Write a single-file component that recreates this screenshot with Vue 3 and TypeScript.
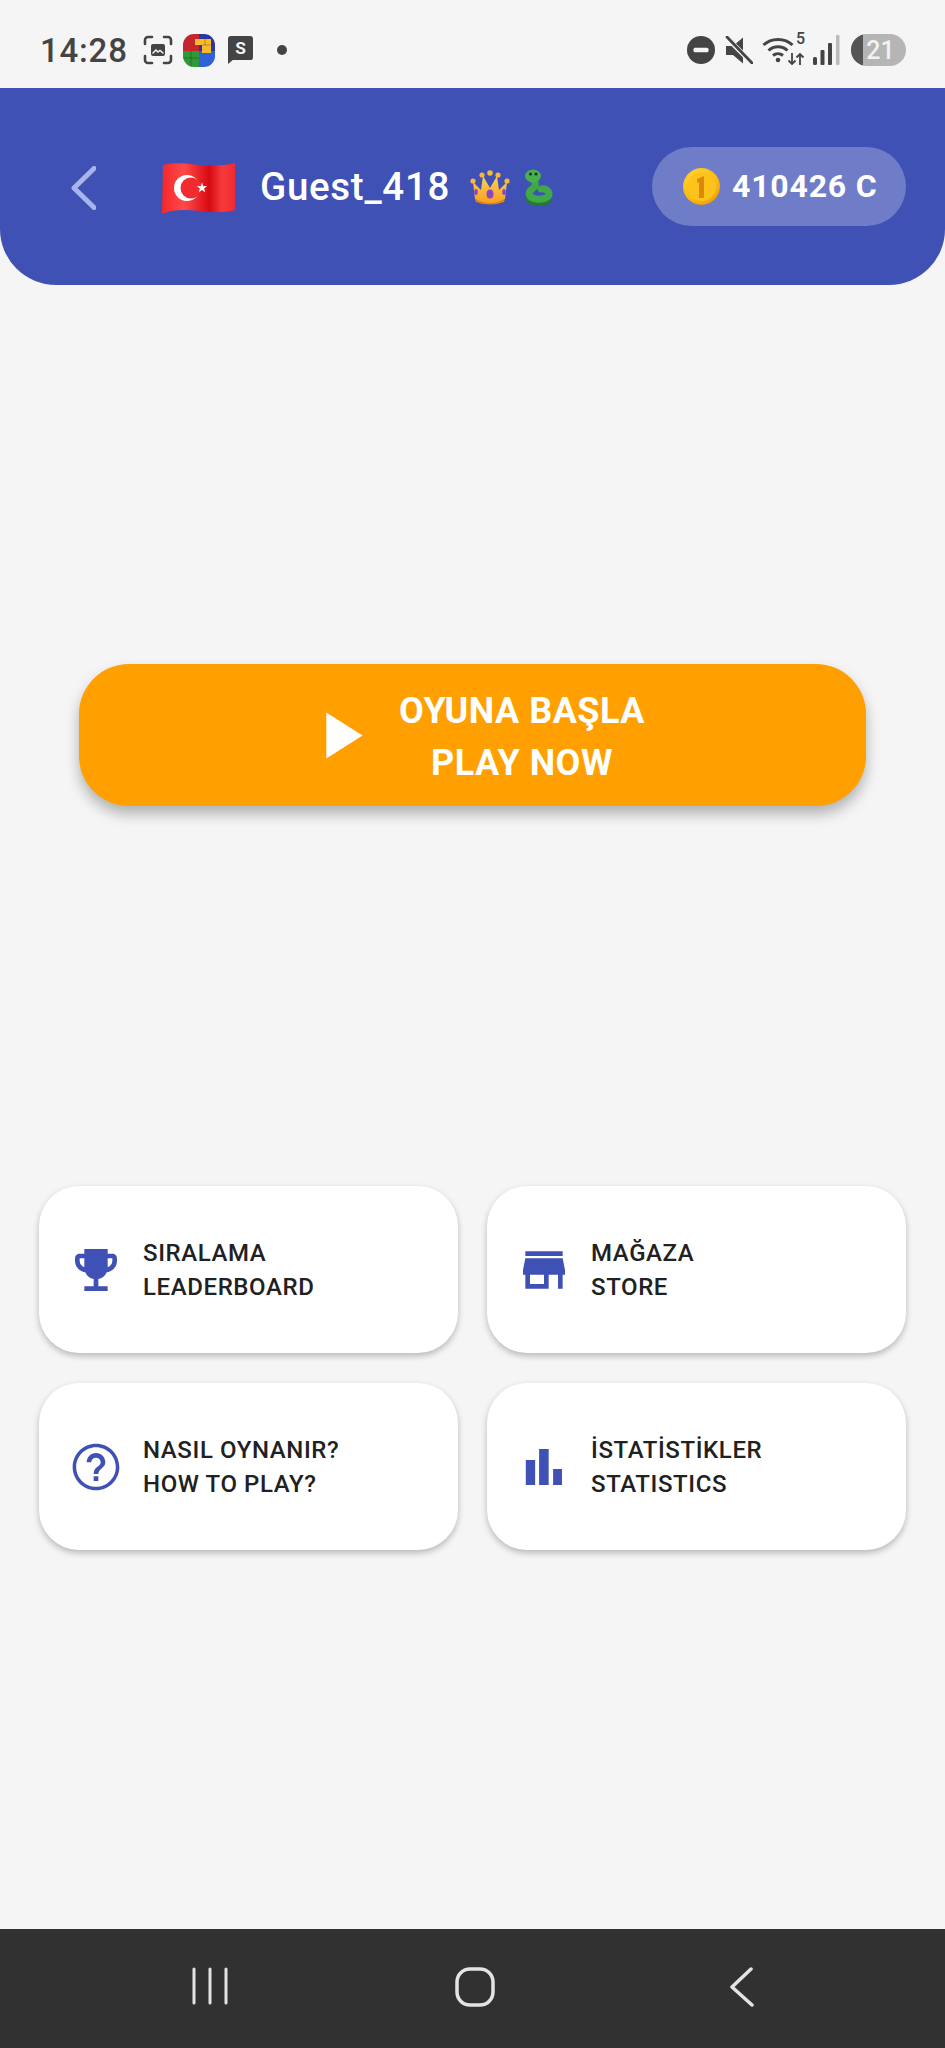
<template>
  <div class="screen">
    <div class="status-bar">
      <span class="clock">14:28</span>
      <svg class="capture" viewBox="0 0 30 30" fill="none" stroke="#444" stroke-width="2.6" stroke-linecap="round">
        <path d="M2 9V5a3 3 0 0 1 3-3h4M21 2h4a3 3 0 0 1 3 3v4M28 21v4a3 3 0 0 1-3 3h-4M9 28H5a3 3 0 0 1-3-3v-4" />
        <rect x="8" y="9" width="14" height="12" rx="2" fill="#444" stroke="none" />
        <path d="M10 18l3-3 2 2 2-1.500 3 2.500" stroke="#f5f5f5" stroke-width="1.500" />
      </svg>
      <svg class="blocks" viewBox="0 0 32 33">
        <defs>
          <clipPath id="blocksClip"><rect width="32" height="33" rx="11" /></clipPath>
        </defs>
        <g clip-path="url(#blocksClip)">
          <rect width="16" height="17" fill="#c4262c" />
          <rect x="16" width="16" height="17" fill="#2a3a9c" />
          <rect y="17" width="16" height="16" fill="#2f9a35" />
          <rect x="16" y="17" width="16" height="16" fill="#2f62d8" />
          <path d="M12 5h16v14h-9v-8h-7z" fill="#f9b92b" />
          <path d="M0 24h16M8 17v16M19 11h9M22 5v6" stroke="#000" stroke-opacity=".25" stroke-width="1" />
        </g>
      </svg>
      <svg class="note" viewBox="0 0 26 29">
        <path d="M3 0h20a3 3 0 0 1 3 3v19a3 3 0 0 1-3 3H5l-5 4V3a3 3 0 0 1 3-3z" fill="#444" />
        <text x="13" y="19" text-anchor="middle" class="note-letter">S</text>
      </svg>
      <span class="dot"></span>

      <span class="status-spacer"></span>

      <svg class="dnd" viewBox="0 0 28 28">
        <circle cx="14" cy="14" r="14" fill="#444" />
        <rect x="6.500" y="11.800" width="15" height="4.400" rx="1.500" fill="#f5f5f5" />
      </svg>
      <svg class="mute" viewBox="0 0 28 28">
        <path d="M0 9h7l10-8.500v26L7 18H0z" fill="#444" transform="translate(1 1)" />
        <path d="M2 2l24 24" stroke="#f5f5f5" stroke-width="5" />
        <path d="M2 1l25 26" stroke="#444" stroke-width="2.800" stroke-linecap="round" />
      </svg>
      <div class="wifi">
        <svg viewBox="0 0 32 30" fill="none" stroke="#444" stroke-width="3" class="wifi-arcs">
          <path d="M1.500 11C9 3.500 23 3.500 30.500 11" />
          <path d="M6.500 16.500C12 11.500 20 11.500 25.500 16.500" />
          <path d="M11 21.500c3-2.500 7-2.500 10 0" />
          <circle cx="16" cy="26" r="2.300" fill="#444" stroke="none" />
        </svg>
        <span class="wifi-five">5</span>
        <svg viewBox="0 0 18 12" class="wifi-arrows" fill="none" stroke="#444" stroke-width="1.800">
          <path d="M5 0v11M1.500 7.500L5 11l3.500-3.500M13 12V1M9.500 4.500L13 1l3.500 3.500" />
        </svg>
      </div>
      <svg class="signal" viewBox="0 0 27 30">
        <rect x="0" y="22" width="4" height="8" rx="1.500" fill="#444" />
        <rect x="7.500" y="15" width="4" height="15" rx="1" fill="#444" />
        <rect x="15" y="8" width="4" height="22" rx="1" fill="#444" />
        <rect x="23" y="0" width="3.500" height="30" rx="1" fill="#bbb" />
      </svg>
      <div class="battery">
        <span class="battery-fill"></span>
        <span class="battery-text">21</span>
      </div>
    </div>

    <header class="top-bar">
      <svg class="back" viewBox="0 0 25 44" fill="none" stroke="#a9b5ea" stroke-width="5" stroke-linecap="round" stroke-linejoin="round">
        <path d="M23 2.500L3 22l20 19.500" />
      </svg>
      <svg class="flag" viewBox="0 0 73 53">
        <defs>
          <linearGradient id="flagShade" x1="0" x2="1" y1="0" y2="0">
            <stop offset="0" stop-color="#f4272b" />
            <stop offset=".3" stop-color="#ff4a4a" />
            <stop offset=".65" stop-color="#d80a12" />
            <stop offset=".82" stop-color="#f53a3c" />
            <stop offset="1" stop-color="#f02a30" />
          </linearGradient>
        </defs>
        <path d="M1 4C20-2 44 9 73 2v47C48 56 24 43 0 53z" fill="url(#flagShade)" />
        <circle cx="25" cy="27" r="13" fill="#fff" />
        <circle cx="29" cy="27" r="10.500" fill="#f02c30" />
        <path d="M40 21.500l1.300 3.700 3.900-.1-3.100 2.400 1.100 3.700-3.200-2.200-3.200 2.200 1.100-3.700-3.100-2.400 3.900.1z" fill="#fff" />
      </svg>
      <span class="player">Guest_418</span>
      <svg class="crown" viewBox="0 0 40 35">
        <defs>
          <linearGradient id="crownGold" x1="0" x2="0" y1="0" y2="1">
            <stop offset="0" stop-color="#fdd05a" />
            <stop offset="1" stop-color="#f7a01e" />
          </linearGradient>
        </defs>
        <path d="M3 12l8 8 2-14 7 12 7-12 2 14 8-8-2 17q-15 9-30 0z" fill="url(#crownGold)" />
        <path d="M5 29q15 8 30 0l-1 3q-14 5-28 0z" fill="#e0841c" />
        <circle cx="3" cy="11" r="2.600" fill="#f6b73c" />
        <circle cx="12" cy="5" r="2.600" fill="#f6b73c" />
        <circle cx="20" cy="3" r="2.800" fill="#f6b73c" />
        <circle cx="28" cy="5" r="2.600" fill="#f6b73c" />
        <circle cx="37" cy="11" r="2.600" fill="#f6b73c" />
        <ellipse cx="20" cy="24" rx="3.500" ry="4.500" fill="#8e44c9" />
        <ellipse cx="6" cy="22" rx="1.800" ry="3" fill="#8e44c9" />
        <ellipse cx="34" cy="22" rx="1.800" ry="3" fill="#8e44c9" />
      </svg>
      <svg class="snake" viewBox="0 0 30 37" fill="none">
        <path d="M4 31c6 5 18 5 22 1" stroke="#237a30" stroke-width="4" stroke-linecap="round" />
        <path d="M9 9c5 5 4 8 0 11-5 4-3 9 4 10 6 1 13-1 13-5 0-4-5-6-8-5" stroke="#3fa94a" stroke-width="7" stroke-linecap="round" />
        <ellipse cx="10" cy="7" rx="8" ry="6.500" fill="#46b04f" />
        <circle cx="7.500" cy="5" r="1.500" fill="#16301a" />
        <circle cx="13" cy="5" r="1.500" fill="#16301a" />
      </svg>
      <span class="header-spacer"></span>
      <div class="coins">
        <svg class="coin" viewBox="0 0 37 37">
          <defs>
            <radialGradient id="coinGold" cx=".4" cy=".35" r=".75">
              <stop offset="0" stop-color="#ffe04d" />
              <stop offset=".7" stop-color="#fbb80f" />
              <stop offset="1" stop-color="#e48f0a" />
            </radialGradient>
          </defs>
          <circle cx="18.500" cy="18.500" r="18.500" fill="url(#coinGold)" />
          <circle cx="18.500" cy="18.500" r="14.500" fill="#fdc31c" />
          <path d="M14 11l7-3v22h-5V14l-2 1z" fill="#d98a0a" />
        </svg>
        <span>410426 C</span>
      </div>
    </header>

    <main class="content">
      <button class="play-btn" type="button">
        <svg class="play-icon" viewBox="0 0 24 24"><path d="M8 5v14l11-7z" fill="#fff" /></svg>
        <span class="play-label">OYUNA BAŞLA<br />PLAY NOW</span>
      </button>

      <div class="menu-grid">
        <div v-for="item in menuItems" :key="item.top" class="menu-card">
          <svg class="menu-icon" viewBox="0 0 24 24"><path :d="item.icon" fill="#3f51b5" /></svg>
          <span class="menu-label">{{ item.top }}<br />{{ item.bottom }}</span>
        </div>
      </div>
    </main>

    <nav class="nav-bar">
      <svg class="nav-recents" viewBox="0 0 36 38" stroke="#e4e4e4" stroke-width="3" stroke-linecap="round">
        <path d="M2 2v34M18 2v34M34 2v34" />
      </svg>
      <svg class="nav-home" viewBox="0 0 40 40" fill="none" stroke="#e4e4e4" stroke-width="3.500">
        <rect x="2" y="2" width="36" height="36" rx="13" />
      </svg>
      <svg class="nav-back" viewBox="0 0 25 40" fill="none" stroke="#e4e4e4" stroke-width="3.500" stroke-linecap="round" stroke-linejoin="round">
        <path d="M22 2L3 20l20 18" />
      </svg>
    </nav>
  </div>
</template>

<script setup lang="ts">
interface MenuItem {
  top: string
  bottom: string
  icon: string
}

const menuItems: MenuItem[] = [
  {
    top: 'SIRALAMA',
    bottom: 'LEADERBOARD',
    icon: 'M19 5h-2V3H7v2H5c-1.100 0-2 .9-2 2v1c0 2.550 1.920 4.630 4.390 4.940.63 1.500 1.980 2.630 3.610 2.960V19H7v2h10v-2h-4v-3.100c1.630-.33 2.980-1.460 3.610-2.960C19.080 12.630 21 10.550 21 8V7c0-1.100-.9-2-2-2zM5 8V7h2v3.820C5.840 10.400 5 9.300 5 8zm14 0c0 1.300-.84 2.400-2 2.820V7h2v1z'
  },
  {
    top: 'MAĞAZA',
    bottom: 'STORE',
    icon: 'M20 4H4v2h16V4zm1 10v-2l-1-5H4l-1 5v2h1v6h10v-6h4v6h2v-6h1zm-9 4H6v-4h6v4z'
  },
  {
    top: 'NASIL OYNANIR?',
    bottom: 'HOW TO PLAY?',
    icon: 'M11 18h2v-2h-2v2zm1-16C6.480 2 2 6.480 2 12s4.480 10 10 10 10-4.480 10-10S17.520 2 12 2zm0 18.500c-4.690 0-8.500-3.810-8.500-8.500s3.810-8.500 8.500-8.500 8.500 3.810 8.500 8.500-3.810 8.500-8.500 8.500zM12 6c-2.210 0-4 1.790-4 4h2c0-1.100.9-2 2-2s2 .9 2 2c0 2-3 1.750-3 5h2c0-2.250 3-2.500 3-5 0-2.210-1.790-4-4-4z'
  },
  {
    top: 'İSTATİSTİKLER',
    bottom: 'STATISTICS',
    icon: 'M4.200 9h4v10.700h-4zM9.900 4.300h4.100v15.400H9.900zM15.900 12.900h3.800v6.800h-3.800z'
  }
]
</script>

<style>
html,
body {
  margin: 0;
  background: #f5f5f5;
}
</style>

<style scoped>
.screen {
  width: 945px;
  height: 2048px;
  display: flex;
  flex-direction: column;
  background: #f5f5f5;
  font-family: Roboto, "Liberation Sans", sans-serif;
  overflow: hidden;
}

.status-bar {
  height: 88px;
  flex-shrink: 0;
  display: flex;
  align-items: center;
  padding: 12px 39px 0 40px;
  box-sizing: border-box;
}

.clock {
  font-size: 33px;
  font-weight: 500;
  color: #444;
  letter-spacing: 0.8px;
  width: 103px;
}

.capture {
  width: 30px;
  height: 30px;
  margin-right: 10px;
}

.blocks {
  width: 32px;
  height: 33px;
  margin-right: 13px;
}

.note {
  width: 25px;
  height: 28px;
}

.note-letter {
  fill: #f5f5f5;
  font-size: 18px;
  font-weight: 700;
  font-family: Roboto, sans-serif;
}

.dot {
  width: 10px;
  height: 10px;
  border-radius: 50%;
  background: #444;
  margin-left: 24px;
}

.status-spacer {
  flex: 1;
}

.dnd {
  width: 28px;
  height: 28px;
  margin-right: 10px;
}

.mute {
  width: 28px;
  height: 28px;
  margin-right: 9px;
}

.wifi {
  position: relative;
  width: 43px;
  height: 32px;
  margin-right: 8px;
}

.wifi-arcs {
  width: 32px;
  height: 30px;
  display: block;
}

.wifi-five {
  position: absolute;
  top: -3px;
  right: 0;
  font-size: 16px;
  line-height: 16px;
  font-weight: 500;
  color: #444;
}

.wifi-arrows {
  position: absolute;
  right: 0;
  bottom: 0;
  width: 18px;
  height: 14px;
}

.signal {
  width: 27px;
  height: 30px;
  margin-right: 11px;
}

.battery {
  position: relative;
  width: 55px;
  height: 32px;
  border-radius: 16px;
  background: #b5b5b5;
  overflow: hidden;
  display: flex;
  align-items: center;
  justify-content: center;
}

.battery-fill {
  position: absolute;
  left: 0;
  top: 0;
  bottom: 0;
  width: 12px;
  background: #555;
}

.battery-text {
  position: relative;
  color: #f2f2f2;
  font-size: 25px;
  font-weight: 500;
  margin-left: 4px;
}

.top-bar {
  height: 197px;
  flex-shrink: 0;
  display: flex;
  align-items: center;
  padding: 0 39px 0 71px;
  box-sizing: border-box;
  background: #3f51b5;
  border-radius: 0 0 56px 56px;
}

.back {
  width: 25px;
  height: 44px;
  margin-right: 66px;
  margin-top: 2px;
}

.flag {
  width: 73px;
  height: 53px;
  margin-right: 25px;
  margin-top: 1px;
}

.player {
  font-size: 38.5px;
  font-weight: 500;
  color: #fff;
  margin-right: 20px;
  letter-spacing: 0.7px;
}

.crown {
  width: 40px;
  height: 35px;
  margin-right: 13px;
  margin-top: 2px;
}

.snake {
  width: 30px;
  height: 37px;
  margin-top: 2px;
}

.header-spacer {
  flex: 1;
}

.coins {
  width: 254px;
  height: 79px;
  border-radius: 40px;
  margin-top: -1px;
  background: rgba(255, 255, 255, 0.25);
  display: flex;
  align-items: center;
  gap: 12px;
  padding-left: 31px;
  box-sizing: border-box;
  color: #fff;
  font-size: 32px;
  font-weight: 700;
  letter-spacing: 0.8px;
}

.coin {
  width: 37px;
  height: 37px;
  flex-shrink: 0;
}

.content {
  flex: 1;
  display: flex;
  flex-direction: column;
  padding: 379px 39px 0;
}

.play-btn {
  width: 787px;
  height: 142px;
  margin: 0 0 380px 40px;
  align-self: flex-start;
  border: none;
  border-radius: 50px;
  background: #ff9f00;
  box-shadow: 0 8px 14px rgba(0, 0, 0, 0.28);
  display: flex;
  align-items: center;
  justify-content: center;
  gap: 20px;
  padding: 0;
  color: #fff;
  font-family: inherit;
}

.play-icon {
  width: 79px;
  height: 79px;
  flex-shrink: 0;
}

.play-label {
  font-size: 36px;
  font-weight: 700;
  letter-spacing: 0.5px;
  line-height: 52px;
  text-align: center;
  padding-top: 3px;
}

.menu-grid {
  display: grid;
  grid-template-columns: 419px 419px;
  grid-auto-rows: 167px;
  column-gap: 29px;
  row-gap: 30px;
}

.menu-card {
  background: #fff;
  border-radius: 40px;
  box-shadow: 0 3px 6px rgba(0, 0, 0, 0.25);
  display: flex;
  align-items: center;
  gap: 19px;
  padding-left: 29px;
}

.menu-icon {
  width: 56px;
  height: 56px;
  flex-shrink: 0;
}

.menu-label {
  font-size: 24px;
  font-weight: 500;
  letter-spacing: 0.6px;
  line-height: 34px;
  color: #212121;
  padding-top: 1px;
}

.nav-bar {
  height: 119px;
  flex-shrink: 0;
  background: #313131;
  position: relative;
}

.nav-recents {
  position: absolute;
  left: 192px;
  top: 38px;
  width: 36px;
  height: 38px;
}

.nav-home {
  position: absolute;
  left: 455px;
  top: 38px;
  width: 40px;
  height: 40px;
}

.nav-back {
  position: absolute;
  left: 729px;
  top: 38px;
  width: 25px;
  height: 40px;
}
</style>
